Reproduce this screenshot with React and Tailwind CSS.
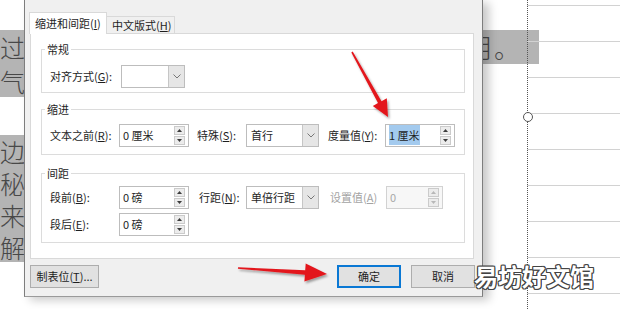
import React from "react";

// Word "段落" dialog over a document page, with two red callout arrows.

function arrowPoints(x0, y0, x1, y1, w0, w1, hl, hw) {
  const dx = x1 - x0;
  const dy = y1 - y0;
  const len = Math.hypot(dx, dy);
  const ux = dx / len;
  const uy = dy / len;
  const nx = -uy;
  const ny = ux;
  const bx = x1 - ux * hl;
  const by = y1 - uy * hl;
  const pts = [
    [x0 + (nx * w0) / 2, y0 + (ny * w0) / 2],
    [bx + (nx * w1) / 2, by + (ny * w1) / 2],
    [bx + nx * hw, by + ny * hw],
    [x1, y1],
    [bx - nx * hw, by - ny * hw],
    [bx - (nx * w1) / 2, by - (ny * w1) / 2],
    [x0 - (nx * w0) / 2, y0 - (ny * w0) / 2],
  ];
  return pts.map((p) => p.map((v) => v.toFixed(1)).join(",")).join(" ");
}

function Spinner({ disabled }) {
  const c = disabled ? "#b8b8b8" : "#3c3c3c";
  return (
    <div className="mr-[3px] flex w-[11px] shrink-0 flex-col gap-px">
      {[0, 1].map((i) => (
        <div key={i} className="flex h-[9px] items-center justify-center border border-[#cbcbcb] bg-[#ececec]">
          <svg width="5" height="3" viewBox="0 0 5 3">
            <path d={i === 0 ? "M0 3L2.5 0L5 3Z" : "M0 0L2.5 3L5 0Z"} fill={c} />
          </svg>
        </div>
      ))}
    </div>
  );
}

function SpinBox({ children, className = "", disabled }) {
  return (
    <div
      className={`flex h-[23px] shrink-0 items-center border ${
        disabled ? "border-[#d2d2d2] bg-[#f7f7f7] text-[#a8a8a8]" : "border-[#bdbdbd] bg-white"
      } ${className}`}
    >
      <span className="flex-1 pl-[3px] leading-[21px]">{children}</span>
      <Spinner disabled={disabled} />
    </div>
  );
}

function Select({ value, className = "" }) {
  return (
    <div className={`flex h-[23px] shrink-0 border border-[#bdbdbd] bg-white ${className}`}>
      <span className="flex-1 pl-[4px] leading-[21px]">{value}</span>
      <span className="flex w-[16px] items-center justify-center border-l border-[#c6c6c6] bg-[#e6e6e6]">
        <svg width="8" height="5" viewBox="0 0 8 5">
          <path d="M0.5 0.5L4 4L7.5 0.5" fill="none" stroke="#777" strokeWidth="1" />
        </svg>
      </span>
    </div>
  );
}

function Group({ title, className = "", children }) {
  return (
    <fieldset className={`ml-[10px] mr-[8px] border border-[#dcdcdc] px-0 ${className}`}>
      <legend className="ml-[3px] px-[2px] leading-[14px]">{title}</legend>
      {children}
    </fieldset>
  );
}

function Button({ children, className = "" }) {
  return (
    <div className={`flex h-[23px] items-center justify-center border bg-[#e1e1e1] ${className}`}>
      {children}
    </div>
  );
}

export default function App() {
  return (
    <div className="relative flex h-[309px] w-[620px] overflow-hidden bg-white font-['Noto_Sans_CJK_SC',sans-serif] text-[11px] text-[#1e1e1e]">
      {/* document text left of the dialog */}
      <div className="flex w-[24px] shrink-0 flex-col overflow-hidden text-[25px] font-light text-[#484848]">
        <div className="mt-[30px] h-[67px] overflow-hidden bg-[#b4b4b4] leading-[34px]">
          <div>过</div>
          <div>气</div>
        </div>
        <div className="mt-[38px] h-[127px] overflow-hidden bg-[#b4b4b4] leading-[32px]">
          <div>边</div>
          <div>秘</div>
          <div>来</div>
          <div>解</div>
        </div>
      </div>

      {/* paragraph dialog */}
      <div className="relative z-10 flex h-[297px] w-[459px] shrink-0 flex-col border-x border-b border-x-[#7d7d7d] border-b-[#9a9a9a] bg-[#f0f0f0] shadow-[6px_3px_9px_rgba(0,0,0,0.22)]">
        <div className="flex items-end pl-[4px] pt-[12px]">
          <div className="relative z-10 flex h-[22px] w-[78px] items-start border-x border-t border-[#d9d9d9] bg-white pl-[5px] pt-[3px] leading-[14px]">
            缩进和间距(<u>I</u>)
          </div>
          <div className="flex h-[18px] w-[68px] items-start border-r border-t border-[#d9d9d9] pl-[5px] pt-[1px] leading-[14px]">
            中文版式(<u>H</u>)
          </div>
        </div>

        <div className="-mt-px ml-[5px] w-[444px] border border-[#d9d9d9] bg-white pb-[15px] pt-[8px]">
          <Group title="常规">
            <div className="flex items-center pl-[8px] pb-[4px] pt-[9px]">
              <span className="w-[71px] shrink-0">
                对齐方式(<u>G</u>):
              </span>
              <Select value="" className="w-[64px]" />
            </div>
          </Group>

          <Group title="缩进" className="mt-[9px]">
            <div className="flex items-center pl-[8px] pb-[7px] pt-[8px]">
              <span className="w-[69px] shrink-0">
                文本之前(<u>R</u>):
              </span>
              <SpinBox className="w-[70px]">0 厘米</SpinBox>
              <span className="ml-[8px] w-[49px] shrink-0">
                特殊(<u>S</u>):
              </span>
              <Select value="首行" className="w-[73px]" />
              <span className="ml-[9px] w-[57px] shrink-0">
                度量值(<u>Y</u>):
              </span>
              <SpinBox className="w-[70px]">
                <span className="bg-[#a3caee] py-[2px]">1 厘米</span>
              </SpinBox>
            </div>
          </Group>

          <Group title="间距" className="mt-[11px]">
            <div className="flex flex-col gap-[4px] pl-[8px] pb-[6px] pt-[6px]">
              <div className="flex items-center">
                <span className="w-[69px] shrink-0">
                  段前(<u>B</u>):
                </span>
                <SpinBox className="w-[70px]">0 磅</SpinBox>
                <span className="ml-[10px] w-[47px] shrink-0">
                  行距(<u>N</u>):
                </span>
                <Select value="单倍行距" className="w-[73px]" />
                <span className="ml-[11px] w-[56px] shrink-0 text-[#a3a3a3]">
                  设置值(<u>A</u>)
                </span>
                <SpinBox className="w-[57px]" disabled>
                  0
                </SpinBox>
              </div>
              <div className="flex items-center">
                <span className="w-[69px] shrink-0">
                  段后(<u>E</u>):
                </span>
                <SpinBox className="w-[70px]">0 磅</SpinBox>
              </div>
            </div>
          </Group>
        </div>

        <div className="mt-[6px] flex items-center pl-[5px] pr-[7px]">
          <Button className="w-[69px] border-[#adadad]">
            制表位(<u>T</u>)...
          </Button>
          <div className="flex-1" />
          <Button className="w-[64px] border-2 border-[#0a78d4]">确定</Button>
          <Button className="ml-[10px] w-[64px] border-[#adadad]">取消</Button>
        </div>
      </div>

      {/* document page right of the dialog */}
      <div className="grid flex-1">
        <div className="self-start overflow-hidden whitespace-nowrap bg-[#b4b4b4] text-[26px] font-light leading-[34px] text-[#484848] [grid-area:1/1] mt-[30px] h-[34px] w-[56px]">
          <span className="-ml-[15px] inline-block">月。</span>
        </div>
        <div className="ml-[44px] h-[309px] bg-[repeating-linear-gradient(to_bottom,transparent_0px,transparent_5px,#d2d2d2_5px,#d2d2d2_6px,transparent_6px,transparent_36px)] [grid-area:1/1]" />
        <div className="ml-[44px] h-[309px] border-l border-dotted border-[#555] [grid-area:1/1]">
          <div className="-ml-[5.5px] mt-[112px] h-[10px] w-[10px] rounded-full border-[1.5px] border-[#555] bg-white" />
        </div>
      </div>

      {/* red callout arrows */}
      <svg
        className="pointer-events-none absolute left-0 top-0 z-20"
        width="620"
        height="309"
        viewBox="0 0 620 309"
      >
        <defs>
          <filter id="sh" x="-20%" y="-20%" width="140%" height="140%">
            <feDropShadow dx="1.5" dy="2" stdDeviation="1.2" floodColor="#000" floodOpacity="0.35" />
          </filter>
        </defs>
        <g fill="#e3161c" filter="url(#sh)">
          <polygon points={arrowPoints(352, 52, 388, 117, 1.5, 4, 17, 8)} />
          <polygon points={arrowPoints(238, 268, 327, 274, 1.5, 4.5, 22, 9)} />
        </g>
      </svg>

      {/* watermark */}
      <div className="absolute left-[474px] top-[261px] z-30 text-[24px] font-bold leading-[30px] text-white [text-shadow:1px_0_#444,-1px_0_#444,0_1px_#444,0_-1px_#444,1px_1px_#444,-1px_-1px_#444,1px_-1px_#444,-1px_1px_#444]">
        易坊好文馆
      </div>
    </div>
  );
}
